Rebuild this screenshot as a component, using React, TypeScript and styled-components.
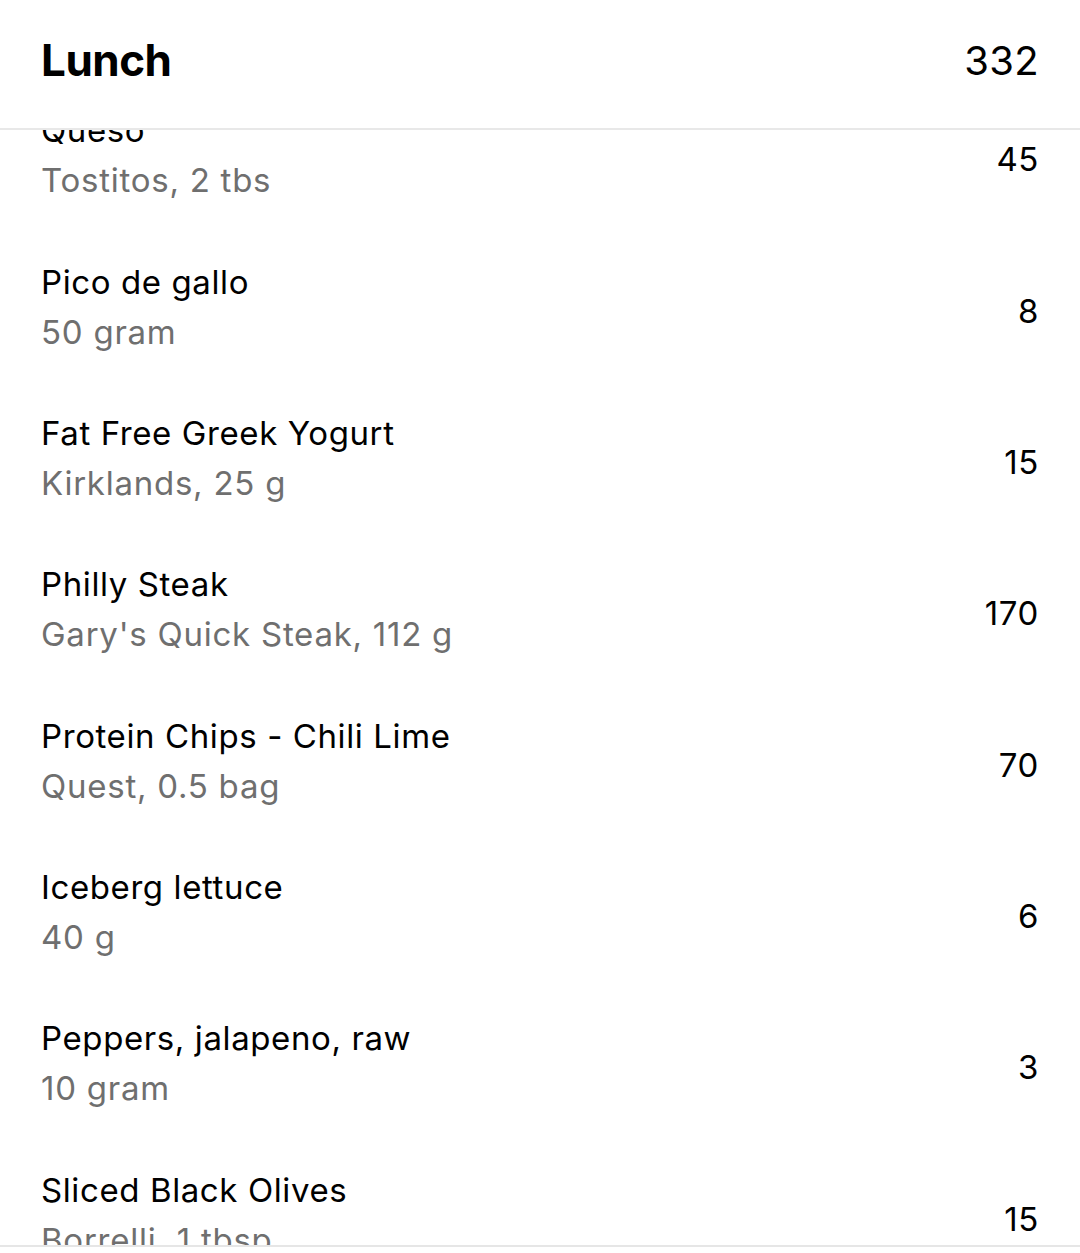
import React from "react";
import styled, { createGlobalStyle } from "styled-components";

const Global = createGlobalStyle`
  html, body { margin: 0; padding: 0; background: #ffffff; }
  body { font-family: Inter, "Noto Sans", "Liberation Sans", sans-serif; -webkit-font-smoothing: antialiased; }
`;

const Page = styled.div`
  height: 1253px;
  display: flex;
  flex-direction: column;
  background: #ffffff;
  overflow: hidden;
`;

const Header = styled.header`
  flex: 0 0 auto;
  height: 130px;
  box-sizing: border-box;
  display: flex;
  align-items: center;
  justify-content: space-between;
  padding: 0 41px 8px 41px;
  border-bottom: 2px solid #e8e8e8;
  background: #ffffff;
`;

const Title = styled.h1`
  margin: 0;
  font-size: 44px;
  font-weight: 700;
  color: #000000;
  letter-spacing: -0.5px;
`;

const Total = styled.span`
  font-size: 40px;
  font-weight: 400;
  color: #000000;
  letter-spacing: 0.3px;
`;

const Scroller = styled.main`
  flex: 1 1 auto;
  overflow: hidden;
  min-height: 0;
`;

const List = styled.ul`
  list-style: none;
  margin: -50.3px 0 0 0;
  padding: 0;
`;

const Row = styled.li`
  height: 151.33px;
  box-sizing: border-box;
  display: flex;
  align-items: center;
  justify-content: space-between;
  padding: 0 41px 0 41px;
`;

const Texts = styled.div`
  display: flex;
  flex-direction: column;
`;

const Name = styled.span`
  font-size: 33px;
  line-height: 50px;
  color: #000000;
  letter-spacing: 0.6px;
`;

const Detail = styled.span`
  font-size: 33px;
  line-height: 50px;
  color: #6f6f6f;
  letter-spacing: 0.75px;
`;

const Calories = styled.span`
  font-size: 33px;
  line-height: 50px;
  padding-top: 8px;
  color: #000000;
  letter-spacing: 0.6px;
`;

const Footer = styled.footer`
  flex: 0 0 8px;
  box-sizing: border-box;
  border-top: 2px solid #e6e6e6;
  background: #ffffff;
`;

const items = [
  { name: "Queso", detail: "Tostitos, 2 tbs", cal: 45 },
  { name: "Pico de gallo", detail: "50 gram", cal: 8 },
  { name: "Fat Free Greek Yogurt", detail: "Kirklands, 25 g", cal: 15 },
  { name: "Philly Steak", detail: "Gary's Quick Steak, 112 g", cal: 170 },
  { name: "Protein Chips - Chili Lime", detail: "Quest, 0.5 bag", cal: 70 },
  { name: "Iceberg lettuce", detail: "40 g", cal: 6 },
  { name: "Peppers, jalapeno, raw", detail: "10 gram", cal: 3 },
  { name: "Sliced Black Olives", detail: "Borrelli, 1 tbsp", cal: 15 },
];

export default function App() {
  return (
    <Page>
      <Global />
      <Header>
        <Title>Lunch</Title>
        <Total>332</Total>
      </Header>
      <Scroller>
        <List>
          {items.map((it) => (
            <Row key={it.name}>
              <Texts>
                <Name>{it.name}</Name>
                <Detail>{it.detail}</Detail>
              </Texts>
              <Calories>{it.cal}</Calories>
            </Row>
          ))}
        </List>
      </Scroller>
      <Footer />
    </Page>
  );
}
